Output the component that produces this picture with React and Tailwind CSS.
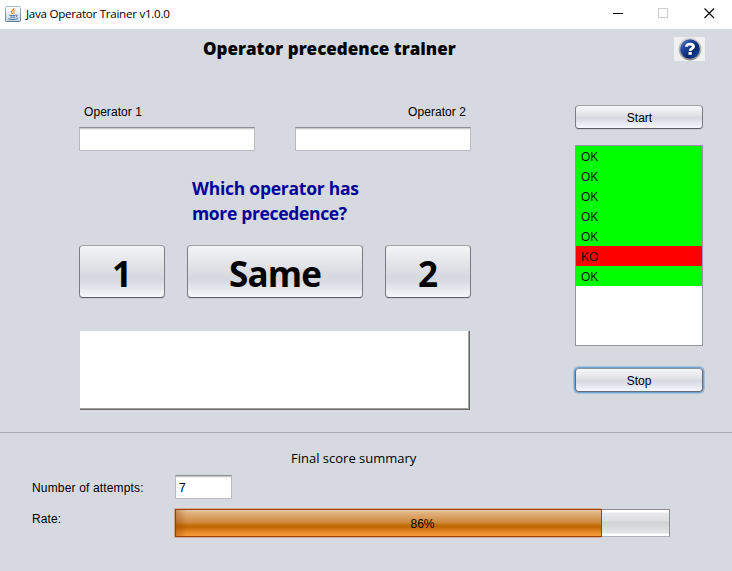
function JavaIcon() {
  return (
    <svg width="16" height="16" viewBox="0 0 16 16" fill="none">
      <defs>
        <linearGradient id="java-frame" x1="0" y1="0" x2="0" y2="1">
          <stop offset="0" stopColor="#a9bccb" />
          <stop offset="1" stopColor="#5b7c99" />
        </linearGradient>
        <linearGradient id="java-fill" x1="0" y1="0" x2="0" y2="1">
          <stop offset="0" stopColor="#ffffff" />
          <stop offset="0.5" stopColor="#e6edf2" />
          <stop offset="1" stopColor="#c6d4df" />
        </linearGradient>
      </defs>
      <rect x="0.5" y="0.5" width="15" height="15" rx="1" fill="url(#java-fill)" stroke="url(#java-frame)" />
      <path d="M8.8 2C9.6 3.8 6.2 4.4 6.5 6C6.7 6.8 7.4 7.4 7.6 8.1" stroke="#e8842c" strokeWidth="1.3" />
      <path d="M10.6 4.2C8.8 4.8 8.2 5.7 8.9 6.6C9.2 7.2 9 7.7 8.7 8.1" stroke="#e8842c" strokeWidth="1" />
      <path d="M4.4 9.2C5.5 9.7 9.5 9.7 10.6 9.1M5.2 11C6.5 11.4 9 11.4 10.2 11M3.4 12.8C5 13.7 11 13.7 12.8 12.7M10.8 9.1C13 8.7 12.8 10.5 11 11" stroke="#416f99" strokeWidth="1" />
    </svg>
  );
}

function HelpIcon() {
  return (
    <svg width="31" height="24" viewBox="0 0 31 24">
      <defs>
        <linearGradient id="help-ring" x1="0" y1="0" x2="0" y2="1">
          <stop offset="0" stopColor="#d9d9d9" />
          <stop offset="1" stopColor="#8b8b8b" />
        </linearGradient>
        <linearGradient id="help-fill" x1="0" y1="0" x2="1" y2="1">
          <stop offset="0" stopColor="#7792cb" />
          <stop offset="0.3" stopColor="#2348a0" />
          <stop offset="0.65" stopColor="#07286f" />
          <stop offset="1" stopColor="#1859b8" />
        </linearGradient>
      </defs>
      <rect width="31" height="24" fill="#f0f0f0" />
      <circle cx="16" cy="12" r="11.4" fill="url(#help-ring)" />
      <circle cx="16" cy="12" r="9.8" fill="url(#help-fill)" />
      <path d="M12.5 9.7C12.6 7.7 14 7.1 16 7.1C18.2 7.1 19.5 8 19.5 9.5C19.5 11.5 16.1 11.4 16.1 13.9" fill="none" stroke="#fff" strokeWidth="2.9" />
      <rect x="14.5" y="15" width="3.3" height="2.8" fill="#fff" />
    </svg>
  );
}

const FIELD =
  "box-border border border-[#bbbcbf] border-t-[#8d8e91] bg-white shadow-[inset_0_1px_0_#cbcbcb,inset_0_2px_0_#f0f0f0]";
const BUTTON =
  "box-border rounded-[4px] border border-[#797c83] border-t-[#a2a4a9] border-b-[#5c5f65] shadow-[0_1px_0_#c6c9d0] text-black flex items-center justify-center";
const SMALL_FILL =
  "bg-[linear-gradient(180deg,#f7f8fa_0%,#e4e6ea_35%,#d6d9df_55%,#e3e7ee_75%,#f6f8fd_100%)]";
const BIG_FILL =
  "bg-[linear-gradient(180deg,#f3f4f6_0%,#e2e4e8_35%,#d6d9df_60%,#d8dbe1_70%,#f4f8fb_100%)]";

const RESULTS = ["OK", "OK", "OK", "OK", "OK", "KO", "OK"];

function TitleBar() {
  return (
    <header className="flex h-[29px] items-start bg-white">
      <div className="flex flex-1 items-center pl-[5px] pt-[5px]">
        <JavaIcon />
        <span className="ml-[5px] mt-px font-['Open_Sans',sans-serif] text-[11.6px] leading-4 tracking-[-0.27px]">
          Java Operator Trainer v1.0.0
        </span>
      </div>
      <svg className="mr-[17px] mt-[7px]" width="102" height="12" viewBox="0 0 102 12" fill="none">
        <path d="M0 6.5H10" stroke="#000" />
        <rect x="45.5" y="1.5" width="9" height="9" stroke="#ccc" />
        <path d="M91.5 1.5L101 11M101 1.5L91.5 11" stroke="#000" strokeWidth="1.1" />
      </svg>
    </header>
  );
}

function Trainer() {
  return (
    <div className="flex w-[392px] flex-col">
      <div className="flex h-[22px] items-start justify-between pl-[5px] pr-[5px] leading-[14px] tracking-[0.06px]">
        <span>Operator 1</span>
        <span>Operator 2</span>
      </div>
      <div className="flex justify-between">
        <div className={`${FIELD} h-6 w-44`} />
        <div className={`${FIELD} h-6 w-44`} />
      </div>
      <p className="ml-[113px] mt-[25px] w-[200px] font-['Open_Sans',sans-serif] text-[17.5px] font-bold leading-[25px] tracking-[-0.25px] text-[#000099]">
        Which operator has
        <br />
        <span className="tracking-[-0.33px]">more precedence?</span>
      </p>
      <div className="mt-[19px] flex justify-between font-['Open_Sans',sans-serif] text-[35px] font-bold leading-none">
        <button className={`${BUTTON} ${BIG_FILL} h-[53px] w-[86px]`}>
          <span className="mt-[3px]">1</span>
        </button>
        <button className={`${BUTTON} ${BIG_FILL} h-[53px] w-44`}>
          <span className="mt-[3px] tracking-[-0.9px]">Same</span>
        </button>
        <button className={`${BUTTON} ${BIG_FILL} h-[53px] w-[86px]`}>
          <span className="mt-[3px]">2</span>
        </button>
      </div>
      <div className="ml-px mt-[33px] h-[79px] w-[390px] border-b border-r border-[#696969] bg-white shadow-[inset_-1px_-1px_0_#a0a0a0]" />
    </div>
  );
}

function Sidebar() {
  return (
    <div className="flex w-32 flex-col">
      <button className={`${BUTTON} ${SMALL_FILL} h-6 w-32`}>
        <span className="ml-px mt-px">Start</span>
      </button>
      <ul className="mt-4 h-[201px] border border-[#9297a1] bg-white">
        {RESULTS.map((result, i) => (
          <li
            key={i}
            className={`flex h-5 items-center pl-[5px] pt-[2px] text-[#111] ${result === "OK" ? "bg-[#00ff00]" : "bg-[#ff0000]"}`}
          >
            {result}
          </li>
        ))}
      </ul>
      <button className="mt-[22px] box-border flex h-6 w-32 items-center justify-center rounded-[4px] border border-[#686c74] border-t-[#8c939d] bg-[linear-gradient(180deg,#f7f8fa_0%,#e4e6ea_35%,#d6d9df_55%,#e3e7ee_75%,#f6f8fd_100%)] text-black shadow-[0_0_0_1px_#73a4d1,0_0_0_2px_#a3c0dc]">
        <span className="mt-px">Stop</span>
      </button>
    </div>
  );
}

function Summary() {
  return (
    <section className="flex h-[138px] flex-col pl-8">
      <h2 className="mt-[16px] pl-[259px] font-['Open_Sans',sans-serif] text-[13px] leading-[18px]">
        Final score summary
      </h2>
      <div className="mt-[8px] flex h-6 items-center">
        <span className="w-[143px] pt-[2px] tracking-[0.16px]">Number of attempts:</span>
        <div className={`${FIELD} flex h-6 w-[57px] items-center pl-[3px] pt-[2px]`}>7</div>
      </div>
      <div className="mt-[10px] flex h-7 items-start">
        <span className="w-[143px] pt-[2px] leading-[16px] tracking-[0.1px]">Rate:</span>
        <div className="relative flex h-7 w-[495px] border border-[#8b8d93] border-b-[#adb0b7] bg-[linear-gradient(180deg,#fff_0,#fff_2px,#eaeaeb_3px,#dcdddf_11px,#cfd0d2_12px,#e4e5e7_23px,#fff_24px)]">
          <div className="-ml-px -mt-px h-7 w-[427px] border border-[#9a420a] bg-[linear-gradient(90deg,#8f380055_0,transparent_11px),linear-gradient(180deg,#eac7a5_0,#e0b07c_3px,#d18b42_12px,#c6700f_15px,#c26604_17px,#e58a27_22px,#f59a35_26px)] shadow-[-1px_-1px_0_0_#d29c73aa,-1px_1px_0_0_#d29c73aa]" />
          <span className="absolute inset-0 flex items-center justify-center pt-[2px]">86%</span>
        </div>
      </div>
    </section>
  );
}

export default function App() {
  return (
    <div className="h-[571px] w-[732px] overflow-hidden bg-[#d6d9e0] font-['Liberation_Sans',Arial,sans-serif] text-[12px] leading-4 text-black">
      <TitleBar />
      <main className="h-[403px]">
        <div className="flex h-[76px] items-start justify-between pl-[203px] pr-[27px] pt-2">
          <h1 className="font-['Open_Sans',sans-serif] text-[17px] font-extrabold leading-[24px] tracking-[0.01px]">
            Operator precedence trainer
          </h1>
          <HelpIcon />
        </div>
        <div className="flex justify-between pl-[79px] pr-[29px]">
          <Trainer />
          <Sidebar />
        </div>
      </main>
      <hr className="h-px border-0 bg-[#a5a9b2]" />
      <Summary />
    </div>
  );
}
